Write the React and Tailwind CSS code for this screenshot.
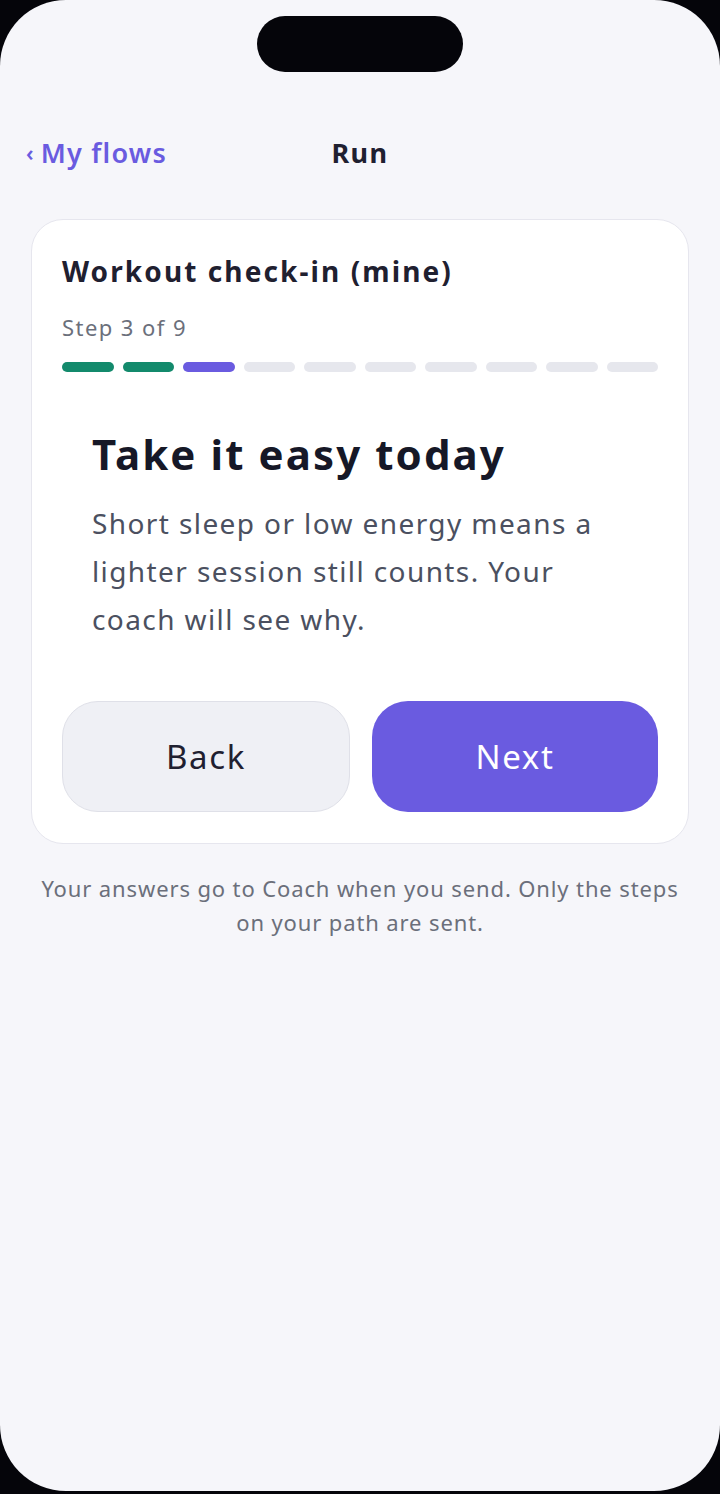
export default function App() {
  const segs = ["g", "g", "p", "x", "x", "x", "x", "x", "x", "x"];
  return (
    <div className="w-[720px] h-[1494px] bg-[#05050a] overflow-hidden" style={{ fontFamily: "'Noto Sans', sans-serif" }}>
      <div className="relative w-[720px] h-[1491px] bg-[#f6f6fa] rounded-[66px] flex flex-col">
        <div className="absolute left-[257px] top-[16px] w-[206px] h-[56px] rounded-full bg-[#05050a]" />
        <div className="relative h-[219px]">
          <div className="absolute left-[26px] top-[134px] text-[27px] font-semibold tracking-[0.045em] text-[#6a5be0] leading-[38px]">
            <span className="text-[22px] mr-[6px] relative -top-[2px]">‹</span>My flows
          </div>
          <div className="absolute left-0 right-0 top-[134px] text-center text-[27px] font-bold tracking-[0.05em] text-[#1f2030] leading-[38px]">Run</div>
        </div>
        <div className="mx-[31px] rounded-[32px] bg-white border border-[#e6e6ee] px-[30px] pt-[30px] pb-[31px]">
          <div className="text-[28px] font-bold tracking-[0.075em] text-[#1f2030] leading-[42px]">Workout check-in (mine)</div>
          <div className="mt-[20px] text-[22px] tracking-[0.065em] text-[#6b6f7b] leading-[30px]">Step 3 of 9</div>
          <div className="mt-[20px] flex gap-[9px]">
            {segs.map((s, i) => (
              <div
                key={i}
                className={
                  "flex-1 h-[10px] rounded-full " +
                  (s === "g" ? "bg-[#138a6c]" : s === "p" ? "bg-[#6a5be0]" : "bg-[#e6e7ed]")
                }
              />
            ))}
          </div>
          <div className="px-[30px] pt-[54px]">
            <div className="text-[42px] font-bold tracking-[0.05em] text-[#161827] leading-[56px]">Take it easy today</div>
            <div className="mt-[17px] text-[28px] tracking-[0.05em] text-[#4b5060] leading-[48px]">
              Short sleep or low energy means a lighter session still counts. Your coach will see why.
            </div>
          </div>
          <div className="mt-[58px] flex gap-[22px]">
            <div className="flex-1 h-[111px] rounded-[36px] bg-[#eff0f5] border border-[#dfe0e8] flex items-center justify-center text-[33px] tracking-[0.05em] text-[#1f2030]">Back</div>
            <div className="flex-1 h-[111px] rounded-[36px] bg-[#6a5be0] flex items-center justify-center text-[33px] tracking-[0.05em] text-white">Next</div>
          </div>
        </div>
        <div className="mt-[27px] px-[40px] text-center text-[22px] tracking-[0.04em] leading-[34px] text-[#6b6f7b]">
          Your answers go to Coach when you send. Only the steps on your path are sent.
        </div>
      </div>
    </div>
  );
}
